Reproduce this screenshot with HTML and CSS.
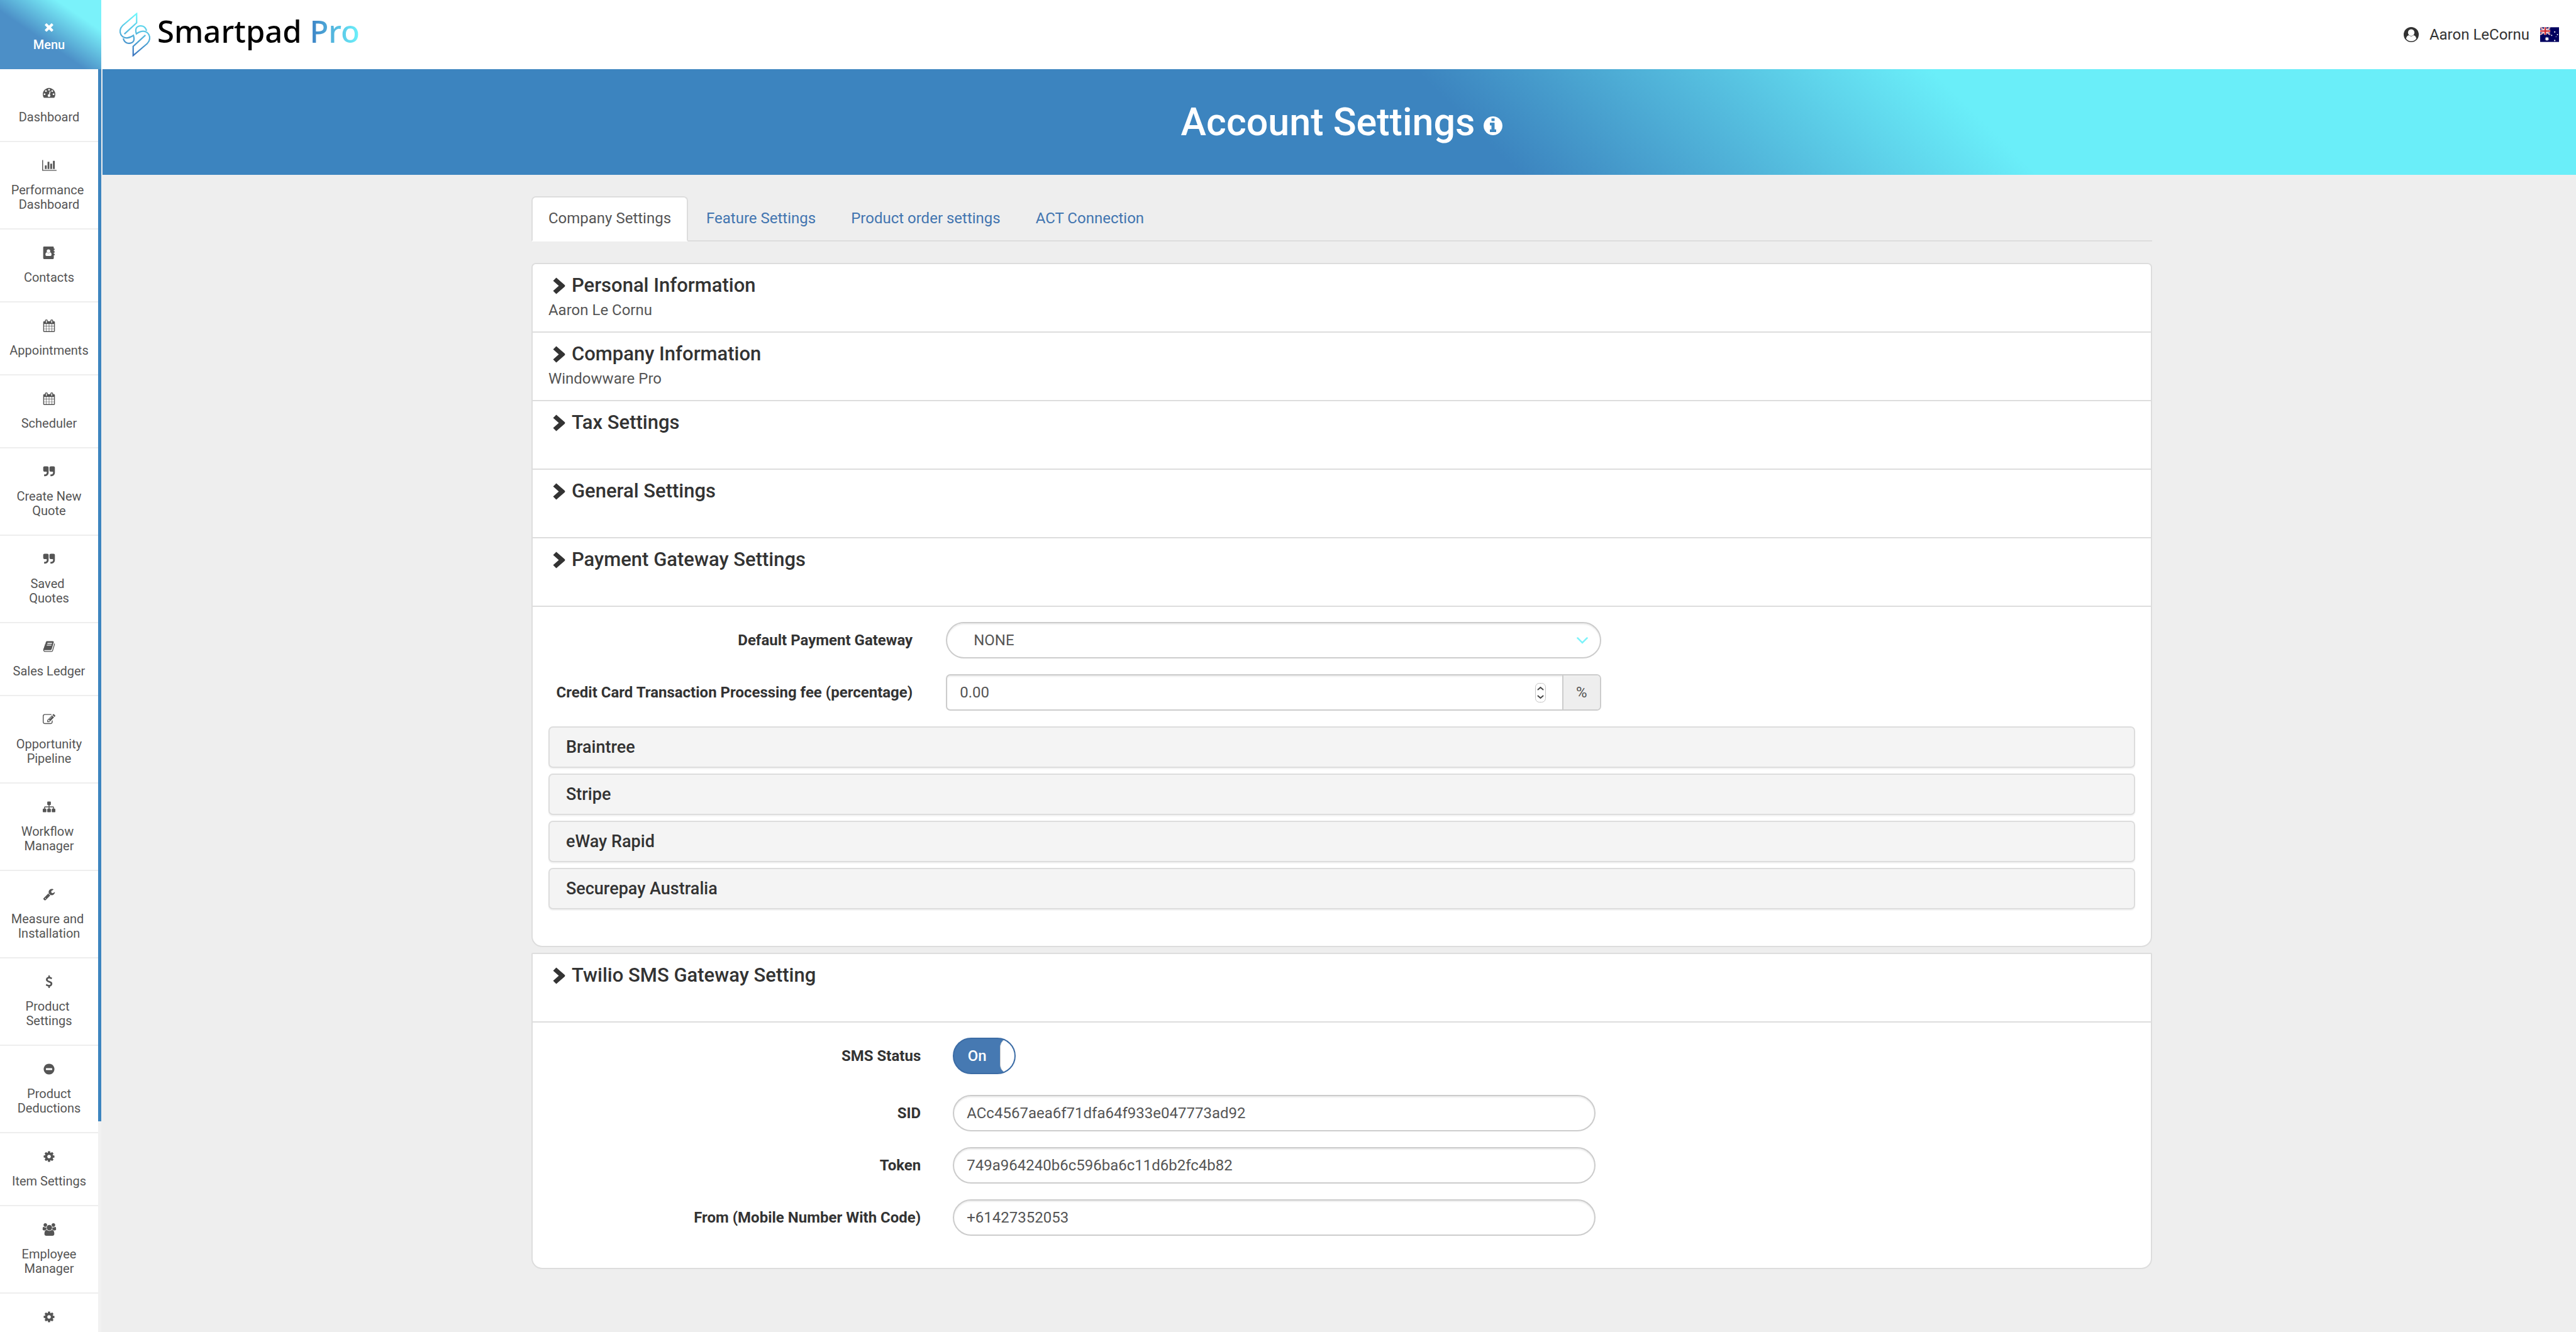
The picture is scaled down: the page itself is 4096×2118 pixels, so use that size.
FILE: index.html
```html
<!DOCTYPE html>
<html lang="en">
<head>
<meta charset="utf-8">
<title>Account Settings - Smartpad Pro</title>
<link rel="stylesheet" href="styles.css">
</head>
<body>
<svg class="sprite" aria-hidden="true">
  <symbol id="i-times" viewBox="0 0 1792 1792"><path d="M1490 1322q0 40-28 68l-136 136q-28 28-68 28t-68-28l-294-294-294 294q-28 28-68 28t-68-28l-136-136q-28-28-28-68t28-68l294-294-294-294q-28-28-28-68t28-68l136-136q28-28 68-28t68 28l294 294 294-294q28-28 68-28t68 28l136 136q28 28 28 68t-28 68l-294 294 294 294q28 28 28 68z"/></symbol>
  <symbol id="i-dash" viewBox="0 0 1792 1792"><path d="M384 1152q0-53-37.5-90.5t-90.5-37.5-90.5 37.5-37.5 90.5 37.5 90.5 90.5 37.5 90.5-37.5 37.5-90.5zm192-448q0-53-37.5-90.5t-90.5-37.5-90.5 37.5-37.5 90.5 37.5 90.5 90.5 37.5 90.5-37.5 37.5-90.5zm428 481l101-382q6-26-7.5-48.5t-38.5-29.5-48 6.5-30 39.5l-101 382q-60 5-107 43.5t-63 98.5q-20 77 20 146t117 89 146-20 89-117q16-60-6-117t-72-91zm660-33q0-53-37.5-90.5t-90.5-37.5-90.5 37.5-37.5 90.5 37.5 90.5 90.5 37.5 90.5-37.5 37.5-90.5zm-640-640q0-53-37.5-90.5t-90.5-37.5-90.5 37.5-37.5 90.5 37.5 90.5 90.5 37.5 90.5-37.5 37.5-90.5zm448 192q0-53-37.5-90.5t-90.5-37.5-90.5 37.5-37.5 90.5 37.5 90.5 90.5 37.5 90.5-37.5 37.5-90.5zm320 448q0 261-141 483-19 29-54 29h-1402q-35 0-54-29-141-221-141-483 0-182 71-348t191-286 286-191 348-71 348 71 286 191 191 286 71 348z"/></symbol>
  <symbol id="i-chart" viewBox="0 0 2048 1792"><path d="M640 896v512h-256v-512h256zm384-512v1024h-256v-1024h256zm1024 1152v128h-2048v-1536h128v1408h1920zm-640-896v768h-256v-768h256zm384-384v1152h-256v-1152h256z"/></symbol>
  <symbol id="i-contacts" viewBox="0 0 1792 1792"><path fill-rule="evenodd" d="M190 0h1250q130 0 130 130v150h70q50 0 50 45v130q0 45-50 45h-70v160h70q50 0 50 45v130q0 45-50 45h-70v160h70q50 0 50 45v130q0 45-50 45h-70v402q0 130-130 130h-1250q-130 0-130-130v-1532q0-130 130-130zM815 400a250 250 0 1 0 0 500a250 250 0 1 0 0-500zM600 830q-220 20-220 340q0 170 160 170h550q160 0 160-170q0-320-220-340q-100 110-215 110t-215-110z"/></symbol>
  <symbol id="i-cal" viewBox="0 0 1792 1792"><path d="M192 1664h288v-288h-288v288zm352 0h320v-288h-320v288zm-352-352h288v-320h-288v320zm352 0h320v-320h-320v320zm-352-384h288v-288h-288v288zm736 736h320v-288h-320v288zm-384-736h320v-288h-320v288zm768 736h288v-288h-288v288zm-384-352h320v-320h-320v320zm-352-864v-288q0-13-9.500-22.500t-22.500-9.500h-64q-13 0-22.500 9.500t-9.500 22.500v288q0 13 9.500 22.500t22.500 9.500h64q13 0 22.500-9.500t9.500-22.500zm736 864h288v-320h-288v320zm-384-384h320v-288h-320v288zm384 0h288v-288h-288v288zm32-480v-288q0-13-9.500-22.500t-22.500-9.500h-64q-13 0-22.500 9.500t-9.500 22.500v288q0 13 9.500 22.500t22.500 9.500h64q13 0 22.500-9.500t9.500-22.500zm384-64v1280q0 52-38 90t-90 38h-1408q-52 0-90-38t-38-90v-1280q0-52 38-90t90-38h128v-96q0-66 47-113t113-47h64q66 0 113 47t47 113v96h384v-96q0-66 47-113t113-47h64q66 0 113 47t47 113v96h128q52 0 90 38t38 90z"/></symbol>
  <symbol id="i-quote" viewBox="0 0 1792 1792"><path d="M832 320v704q0 104-40.500 198.500t-109.500 163.500-163.500 109.500-198.500 40.500h-64q-26 0-45-19t-19-45v-128q0-26 19-45t45-19h64q106 0 181-75t75-181v-32q0-40-28-68t-68-28h-224q-80 0-136-56t-56-136v-384q0-80 56-136t136-56h384q80 0 136 56t56 136zm896 0v704q0 104-40.500 198.500t-109.500 163.500-163.500 109.500-198.500 40.500h-64q-26 0-45-19t-19-45v-128q0-26 19-45t45-19h64q106 0 181-75t75-181v-32q0-40-28-68t-68-28h-224q-80 0-136-56t-56-136v-384q0-80 56-136t136-56h384q80 0 136 56t56 136z"/></symbol>
  <symbol id="i-book" viewBox="0 0 1792 1792"><path d="M1703 478q40 57 18 129l-275 906q-19 64-76.500 107.500t-122.500 43.500h-923q-77 0-148.500-53.500t-99.500-131.500q-24-67-2-127 0-4 3-27t4-37q1-8-3-21.500t-3-19.500q2-11 8-21t16.500-23.500 16.500-23.500q23-38 45-91.500t30-91.500q3-10 .5-30t-.5-28q3-11 17-28t17-23q21-36 42-92t25-90q1-9-2.500-32t.5-28q4-13 22-30.500t22-22.500q19-26 42.500-84.500t27.500-96.500q1-8-3-25.500t-2-26.500q2-8 9-18t18-23 17-21q8-12 16.500-30.500t15-35 16-36 19.500-32 26.500-23.500 36-11.500 47.500 5.500l-1 3q38-9 51-9h761q74 0 114 56t18 130l-274 906q-36 119-71.500 153.500t-128.500 34.500h-869q-27 0-38 15-11 16-1 43 24 70 144 70h923q29 0 56-15.500t35-41.500l300-987q7-22 5-57 38 15 59 43zm-1064 2q-4 13 2 22.500t20 9.500h608q13 0 25.500-9.500t16.500-22.500l21-64q4-13-2-22.500t-20-9.500h-608q-13 0-25.500 9.500t-16.500 22.500zm-83 256q-4 13 2 22.500t20 9.500h608q13 0 25.500-9.500t16.500-22.500l21-64q4-13-2-22.500t-20-9.500h-608q-13 0-25.500 9.500t-16.500 22.500z"/></symbol>
  <symbol id="i-edit" viewBox="0 0 1792 1792"><path d="M888 1184l116-116-152-152-116 116v56h96v96h56zm440-720q-16-16-33 1l-350 350q-17 17-1 33t33-1l350-350q17-17 1-33zm80 594v190q0 119-84.500 203.500t-203.500 84.500h-832q-119 0-203.500-84.500t-84.500-203.500v-832q0-119 84.500-203.500t203.500-84.500h832q63 0 117 25 15 7 18 23 3 17-9 29l-49 49q-14 14-32 8-23-6-45-6h-832q-66 0-113 47t-47 113v832q0 66 47 113t113 47h832q66 0 113-47t47-113v-126q0-13 9-22l64-64q15-15 35-7t20 29zm-96-738l288 288-672 672h-288v-288zm444 132l-92 92-288-288 92-92q28-28 68-28t68 28l152 152q28 28 28 68t-28 68z"/></symbol>
  <symbol id="i-sitemap" viewBox="0 0 1792 1792"><path d="M1792 1248v320q0 40-28 68t-68 28h-320q-40 0-68-28t-28-68v-320q0-40 28-68t68-28h96v-192h-512v192h96q40 0 68 28t28 68v320q0 40-28 68t-68 28h-320q-40 0-68-28t-28-68v-320q0-40 28-68t68-28h96v-192h-512v192h96q40 0 68 28t28 68v320q0 40-28 68t-68 28h-320q-40 0-68-28t-28-68v-320q0-40 28-68t68-28h96v-192q0-52 38-90t90-38h512v-192h-96q-40 0-68-28t-28-68v-320q0-40 28-68t68-28h320q40 0 68 28t28 68v320q0 40-28 68t-68 28h-96v192h512q52 0 90 38t38 90v192h96q40 0 68 28t28 68z"/></symbol>
  <symbol id="i-wrench" viewBox="0 0 1792 1792"><path d="M448 1472q0-26-19-45t-45-19-45 19-19 45 19 45 45 19 45-19 19-45zm644-420l-682 682q-37 37-90 37-52 0-91-37l-106-108q-38-36-38-90 0-53 38-91l681-681q39 98 114.500 173.500t173.500 114.500zm634-435q0 39-23 106-47 134-164.500 217.500t-258.500 83.500q-185 0-316.500-131.500t-131.500-316.500 131.500-316.500 316.500-131.500q58 0 121.500 16.500t107.500 46.500q16 11 16 28t-16 28l-293 169v224l193 107q5-3 79-48.500t135.500-81 70.500-35.500q15 0 23.500 10t8.500 25z"/></symbol>
  <symbol id="i-dollar" viewBox="0 0 1792 1792"><path d="M1362 1185q0 153-99.500 263.500t-258.500 136.500v175q0 14-9 23t-23 9h-135q-13 0-22.500-9.500t-9.500-22.500v-175q-66-9-127.500-31t-101.500-44.500-74-48-46.500-37.500-17.500-18q-17-21-2-41l103-135q7-10 23-12 15-2 24 9l2 2q113 99 243 125 37 8 74 8 81 0 142.500-43t61.500-122q0-28-15-53t-33.500-42-58.500-37.500-66-32-80-32.500q-39-16-61.500-25t-61.500-26.500-62.500-31-56.500-35.500-53.500-42.500-43.500-49-35.500-58-21-66.500-8.500-78q0-138 98-242t255-134v-180q0-13 9.500-22.500t22.500-9.500h135q14 0 23 9t9 23v176q57 6 110.500 23t87 33.500 63.500 37.500 39 29 15 14q17 18 5 38l-81 146q-8 15-23 16-14 3-27-7-3-3-14.500-12t-39-26.500-58.500-32-74.500-26-85.500-11.500q-95 0-155 43t-60 111q0 26 8.500 48t29.500 41.500 39.500 33 56 31 60.500 27 70 27.500q53 20 81 31.500t76 35 75.500 42.500 62 50 53 63.500 31.500 76.500 13 94z"/></symbol>
  <symbol id="i-minus" viewBox="0 0 1792 1792"><path d="M1344 960v-128q0-26-19-45t-45-19h-768q-26 0-45 19t-19 45v128q0 26 19 45t45 19h768q26 0 45-19t19-45zm320-64q0 209-103 385.500t-279.500 279.500-385.500 103-385.500-103-279.500-279.500-103-385.500 103-385.500 279.500-279.500 385.500-103 385.500 103 279.500 279.500 103 385.500z"/></symbol>
  <symbol id="i-cog" viewBox="0 0 1792 1792"><path d="M1152 896q0-106-75-181t-181-75-181 75-75 181 75 181 181 75 181-75 75-181zm512-109v222q0 12-8 23t-20 13l-185 28q-19 54-39 91 35 50 107 138 10 12 10 25t-9 23q-27 37-99 108t-94 71q-12 0-26-9l-138-108q-44 23-91 38-16 136-29 186-7 28-36 28h-222q-14 0-24.500-8.500t-11.500-21.500l-28-184q-49-16-90-37l-141 107q-10 9-25 9-14 0-25-11-126-114-165-168-7-10-7-23 0-12 8-23 15-21 51-66.500t54-70.500q-27-50-41-99l-183-27q-13-2-21-12.500t-8-23.500v-222q0-12 8-23t19-13l186-28q14-46 39-92-40-57-107-138-10-12-10-24 0-10 9-23 26-36 98.500-107.500t94.500-71.500q13 0 26 10l138 107q44-23 91-38 16-136 29-186 7-28 36-28h222q14 0 24.500 8.500t11.500 21.500l28 184q49 16 90 37l142-107q9-9 24-9 13 0 25 10 129 119 165 170 7 8 7 22 0 12-8 23-15 21-51 66.500t-54 70.500q26 50 41 98l183 28q13 2 21 12.500t8 23.500z"/></symbol>
  <symbol id="i-users" viewBox="-64 0 1920 1792"><path d="M529 896q-162 5-265 128h-134q-82 0-138-40.500t-56-118.500q0-353 124-353 6 0 43.500 21t97.500 42.500 119 21.500q67 0 133-23-5 37-5 66 0 139 81 256zm1071 637q0 120-73 189.500t-194 69.500h-874q-121 0-194-69.500t-73-189.500q0-53 3.500-103.500t14-109 26.500-108.500 43-97.500 62-81 85.500-53.500 111.500-20q10 0 43 21.500t73 48 107 48 135 21.500 135-21.500 107-48 73-48 43-21.500q61 0 111.500 20t85.500 53.500 62 81 43 97.500 26.500 108.500 14 109 3.500 103.500zm-1024-1277q0 106-75 181t-181 75-181-75-75-181 75-181 181-75 181 75 75 181zm704 384q0 159-112.500 271.500t-271.500 112.500-271.500-112.500-112.500-271.500 112.500-271.500 271.500-112.500 271.500 112.500 112.500 271.500zm576 225q0 78-56 118.500t-138 40.500h-134q-103-123-265-128 81-117 81-256 0-29-5-66 66 23 133 23 59 0 119-21.500t97.500-42.500 43.500-21q124 0 124 353zm-128-609q0 106-75 181t-181 75-181-75-75-181 75-181 181-75 181 75 75 181z"/></symbol>
  <symbol id="i-info" viewBox="128 128 1536 1536"><path d="M1152 1376v-160q0-14-9-23t-23-9h-96v-512q0-14-9-23t-23-9h-320q-14 0-23 9t-9 23v160q0 14 9 23t23 9h96v320h-96q-14 0-23 9t-9 23v160q0 14 9 23t23 9h448q14 0 23-9t9-23zm-128-896v-160q0-14-9-23t-23-9h-192q-14 0-23 9t-9 23v160q0 14 9 23t23 9h192q14 0 23-9t9-23zm640 416q0 209-103 385.500t-279.500 279.500-385.500 103-385.500-103-279.500-279.500-103-385.500 103-385.500 279.500-279.500 385.500-103 385.500 103 279.500 279.500 103 385.500z"/></symbol>
  <symbol id="i-chevron" viewBox="0 0 20 27"><path d="M5.500 0.500L19 12.200q1 1.300 0 2.600L5.500 26.500L0.500 21.500L9.500 13.500L0.500 5.500z"/></symbol>
</svg>

<div class="app">
  <aside class="sidebar">
    <button class="menu-button" type="button">
      <svg class="menu-icon"><use href="#i-times"/></svg>
      <span>Menu</span>
    </button>
    <div class="side-body">
      <nav class="side-nav">
        <a class="side-link" href="#"><svg class="icon"><use href="#i-dash"/></svg><span>Dashboard</span></a>
        <a class="side-link" href="#"><svg class="icon icon-wide"><use href="#i-chart"/></svg><span>Performance&nbsp;<br>Dashboard</span></a>
        <a class="side-link" href="#"><svg class="icon"><use href="#i-contacts"/></svg><span>Contacts</span></a>
        <a class="side-link" href="#"><svg class="icon"><use href="#i-cal"/></svg><span>Appointments</span></a>
        <a class="side-link" href="#"><svg class="icon"><use href="#i-cal"/></svg><span>Scheduler</span></a>
        <a class="side-link" href="#"><svg class="icon"><use href="#i-quote"/></svg><span>Create New<br>Quote</span></a>
        <a class="side-link" href="#"><svg class="icon"><use href="#i-quote"/></svg><span>Saved&nbsp;<br>Quotes</span></a>
        <a class="side-link" href="#"><svg class="icon"><use href="#i-book"/></svg><span>Sales Ledger</span></a>
        <a class="side-link" href="#"><svg class="icon"><use href="#i-edit"/></svg><span>Opportunity<br>Pipeline</span></a>
        <a class="side-link" href="#"><svg class="icon"><use href="#i-sitemap"/></svg><span>Workflow&nbsp;<br>Manager</span></a>
        <a class="side-link" href="#"><svg class="icon"><use href="#i-wrench"/></svg><span>Measure and&nbsp;<br>Installation</span></a>
        <a class="side-link" href="#"><svg class="icon"><use href="#i-dollar"/></svg><span>Product&nbsp;<br>Settings</span></a>
        <a class="side-link" href="#"><svg class="icon"><use href="#i-minus"/></svg><span>Product<br>Deductions</span></a>
        <a class="side-link" href="#"><svg class="icon"><use href="#i-cog"/></svg><span>Item Settings</span></a>
        <a class="side-link" href="#"><svg class="icon icon-wide"><use href="#i-users"/></svg><span>Employee<br>Manager</span></a>
        <a class="side-link" href="#" aria-label="More settings"><svg class="icon"><use href="#i-cog"/></svg></a>
      </nav>
      <div class="side-track"><div class="side-thumb"></div></div>
    </div>
  </aside>

  <div class="page">
    <header class="topbar">
      <a class="brand" href="#">
        <svg class="brand-mark" viewBox="0 0 57 82" preserveAspectRatio="none" aria-hidden="true">
          <defs><linearGradient id="mark" gradientUnits="userSpaceOnUse" x1="38" y1="2" x2="20" y2="80"><stop offset="0" stop-color="#6ffbfe"/><stop offset="1" stop-color="#3a72bd"/></linearGradient></defs>
          <g fill="none" stroke="url(#mark)" stroke-width="2.600">
            <path d="M9 40L31.700 19V2L6 24C-1 31 0 40 6 45C12 49 19 47 25.800 42.500C28 50 27 54 23 56C17 59 9 57 7 48"/>
            <path d="M48 42L25.300 63V80L51 58C58 51 57 42 51 37C45 33 38 35 31.200 39.500C29 32 30 28 34 26C40 23 48 25 50 34"/>
          </g>
        </svg>
        <span class="brand-name">Smartpad <span class="brand-pro">Pro</span></span>
      </a>
      <a class="account" href="#">
        <svg class="account-icon" viewBox="0 0 28 28" aria-hidden="true">
          <circle cx="14" cy="14" r="14" fill="#333"/>
          <path d="M4.500 21.500q1-5 5-6.200q4.500 4 9 0q4 1.200 5 6.200q-3.500 4.700-9.500 4.700t-9.500-4.700z" fill="#fff"/>
          <circle cx="14" cy="10.200" r="6" fill="#fff"/>
        </svg>
        <span>Aaron LeCornu</span>
        <svg class="flag" viewBox="0 0 36 28" role="img" aria-label="Australia">
          <rect width="36" height="28" fill="#00005f"/>
          <svg width="19.500" height="14.500" viewBox="0 0 20 15" preserveAspectRatio="none">
            <path d="M0 0L20 15M20 0L0 15" stroke="#fff" stroke-width="3"/>
            <path d="M0 0L20 15M20 0L0 15" stroke="#c8242b" stroke-width="1"/>
            <path d="M10 0V15M0 7.500H20" stroke="#fff" stroke-width="5"/>
            <path d="M10 0V15M0 7.500H20" stroke="#d0262c" stroke-width="3"/>
          </svg>
          <path fill="#fff" d="M13 17.800l1 2.200 2.400-.6-1.100 2.100 1.900 1.500-2.300.5v2.400l-1.900-1.500-1.900 1.500v-2.400l-2.300-.5 1.900-1.500-1.100-2.100 2.400.6z"/>
          <circle cx="27.800" cy="9" r="1.300" fill="#fff"/><circle cx="22" cy="15.500" r="1.200" fill="#fff"/><circle cx="33" cy="14" r="1.200" fill="#fff"/><circle cx="30.300" cy="18" r=".7" fill="#fff"/><circle cx="27.800" cy="25.300" r="1.300" fill="#fff"/>
        </svg>
      </a>
    </header>

    <div class="banner">
      <h1>Account Settings</h1>
      <svg class="banner-info"><use href="#i-info"/></svg>
    </div>

    <main class="content">
      <nav class="tabs">
        <a class="tab tab-active" href="#">Company Settings</a>
        <a class="tab" href="#">Feature Settings</a>
        <a class="tab" href="#">Product order settings</a>
        <a class="tab" href="#">ACT Connection</a>
      </nav>

      <section class="panel panel-first">
        <div class="group"><h2><button class="group-toggle" type="button"><svg class="chevron"><use href="#i-chevron"/></svg>Personal Information</button></h2><p>Aaron Le Cornu</p></div>
        <div class="group"><h2><button class="group-toggle" type="button"><svg class="chevron"><use href="#i-chevron"/></svg>Company Information</button></h2><p>Windowware Pro</p></div>
        <div class="group"><h2><button class="group-toggle" type="button"><svg class="chevron"><use href="#i-chevron"/></svg>Tax Settings</button></h2><p></p></div>
        <div class="group"><h2><button class="group-toggle" type="button"><svg class="chevron"><use href="#i-chevron"/></svg>General Settings</button></h2><p></p></div>
        <div class="group"><h2><button class="group-toggle" type="button"><svg class="chevron"><use href="#i-chevron"/></svg>Payment Gateway Settings</button></h2><p></p></div>
        <div class="panel-body gateway">
          <div class="form-row">
            <label for="gateway">Default Payment Gateway</label>
            <div class="select-wrap">
              <select id="gateway" class="field select"><option>NONE</option></select>
              <svg class="select-arrow" viewBox="0 0 18 11" aria-hidden="true"><path d="M1.500 1.500L9 9L16.500 1.500" fill="none" stroke="#7df3fa" stroke-width="2.500" stroke-linecap="round"/></svg>
            </div>
          </div>
          <div class="form-row">
            <label for="fee">Credit Card Transaction Processing fee (percentage)</label>
            <div class="input-group">
              <input id="fee" class="group-input" type="number" step="0.01" value="0.00">
              <svg class="spinner" viewBox="0 0 17 31" aria-hidden="true">
                <rect x=".5" y=".5" width="16" height="30" rx="6" fill="#fff" stroke="#c4c4c4"/>
                <path d="M4.500 10.500L8.500 7L12.500 10.500M4.500 20.500L8.500 24L12.500 20.500" fill="none" stroke="#444" stroke-width="2" stroke-linecap="round"/>
              </svg>
              <span class="addon">%</span>
            </div>
          </div>
          <div class="gateways">
            <button class="gateway-item" type="button">Braintree</button>
            <button class="gateway-item" type="button">Stripe</button>
            <button class="gateway-item" type="button">eWay Rapid</button>
            <button class="gateway-item" type="button">Securepay Australia</button>
          </div>
        </div>
      </section>

      <section class="panel">
        <div class="group"><h2><button class="group-toggle" type="button"><svg class="chevron"><use href="#i-chevron"/></svg>Twilio SMS Gateway Setting</button></h2><p></p></div>
        <div class="panel-body sms">
          <div class="form-row form-row-switch">
            <label for="sms-status">SMS Status</label>
            <label class="switch"><input id="sms-status" type="checkbox" checked><span class="switch-text">On</span><span class="switch-handle"></span></label>
          </div>
          <div class="form-row">
            <label for="sid">SID</label>
            <input id="sid" class="field" type="text" value="ACc4567aea6f71dfa64f933e047773ad92">
          </div>
          <div class="form-row">
            <label for="token">Token</label>
            <input id="token" class="field" type="text" value="749a964240b6c596ba6c11d6b2fc4b82">
          </div>
          <div class="form-row">
            <label for="from">From (Mobile Number With Code)</label>
            <input id="from" class="field" type="text" value="+61427352053">
          </div>
        </div>
      </section>
    </main>
  </div>
</div>
</body>
</html>
```
FILE: styles.css
```css
*, *::before, *::after { box-sizing: border-box; }

body {
  margin: 0;
  background: #eee;
  color: #333;
  font: 24px/33px Roboto, "Liberation Sans", sans-serif;
}

button, input, select { font: inherit; color: inherit; margin: 0; }
button { cursor: pointer; }
a { color: inherit; text-decoration: none; }
h1, h2, p { margin: 0; }
svg { display: block; fill: currentColor; flex: none; }

.sprite { display: none; }

.app { display: flex; height: 100vh; }

/* Sidebar */
.sidebar { display: flex; flex-direction: column; width: 161px; flex: none; height: 100vh; }

.menu-button {
  display: flex;
  flex-direction: column;
  align-items: center;
  gap: 7px;
  height: 110px;
  flex: none;
  padding: 33px 5px 0 0;
  border: 0;
  background: linear-gradient(to top right, #4c8fc7 42%, #7af2fa 78%);
  color: #fff;
  font-size: 20px;
  line-height: 23px;
  font-weight: 500;
}
.menu-icon { width: 20px; height: 20px; }

.side-body { display: flex; flex: 1; min-height: 0; }
.side-nav { flex: 1; overflow: hidden; background: #fff; }

.side-link {
  display: flex;
  flex-direction: column;
  align-items: center;
  gap: 18px;
  padding: 27px 0 26px;
  border-bottom: 2px solid #eee;
  color: #555;
  font-size: 20px;
  line-height: 23px;
  text-align: center;
}
.icon { width: 20px; height: 20px; }
.icon-wide { width: 23px; }

.side-track { width: 5px; background: #f1f1f1; }
.side-thumb { height: calc(100% * 5 / 6); background: #3c84bf; }

/* Page */
.page { flex: 1; min-width: 0; display: flex; flex-direction: column; }

.topbar {
  display: flex;
  justify-content: space-between;
  align-items: center;
  height: 110px;
  flex: none;
  padding: 0 27px 0 29px;
  background: #fff;
}

.brand { display: flex; align-items: center; gap: 11px; }
.brand-mark { width: 49px; height: 70px; }
.brand-name {
  padding-bottom: 12px;
  font: 500 49px/64px "Noto Sans", "Open Sans", sans-serif;
  color: #000;
}
.brand-pro {
  background: linear-gradient(to right, #3b7fc4, #6ef4fc);
  -webkit-background-clip: text;
  background-clip: text;
  color: transparent;
}

.account { display: flex; align-items: center; gap: 17px; }
.account-icon { width: 24px; height: 24px; }
.flag { width: 30px; height: 24px; }

.banner {
  display: flex;
  justify-content: center;
  align-items: center;
  gap: 14px;
  height: 168px;
  flex: none;
  margin-left: 2px;
  padding-left: 8px;
  background: linear-gradient(45deg, #3c84bf 55%, #6aeef9 75%);
  color: #fff;
}
.banner h1 { font-size: 61px; line-height: 68px; font-weight: 500; }
.banner-info { width: 30px; height: 30px; margin-top: 12px; }

.content { width: 66%; margin: 34px auto 0; padding: 0 5px 0 15px; }

/* Tabs */
.tabs { display: flex; border-bottom: 2px solid #ddd; }
.tab {
  margin: 0 2px -2px 0;
  padding: 17px 25px 18px;
  border: 2px solid transparent;
  border-radius: 7px 7px 0 0;
  color: #4275b0;
}
.tab-active { border-color: #ddd #ddd #fff; background: #fff; color: #555; }

/* Panels */
.panel {
  margin-top: 9px;
  border: 2px solid #ddd;
  border-radius: 2px 2px 17px 17px;
  background: #fff;
}
.panel-first { margin-top: 34px; border-radius: 7px 7px 17px 17px; }

.group { padding: 17px 25px; border-bottom: 2px solid #ddd; }
.group h2 { margin-bottom: 6px; font-size: 31px; line-height: 34px; font-weight: 500; }
.group p { min-height: 33px; color: #555; }
.group-toggle {
  display: flex;
  align-items: center;
  gap: 10px;
  padding: 0 0 0 7px;
  border: 0;
  background: none;
}
.chevron { width: 20px; height: 27px; }

.panel-body { display: grid; gap: 25px; padding: 24px 25px 0; }
.gateway { padding-bottom: 58px; }
.sms { padding-bottom: 51px; }

.form-row {
  display: grid;
  grid-template-columns: 579fr 1041fr 796fr;
  column-gap: 53px;
  align-items: center;
}
.sms .form-row { grid-template-columns: 592fr 1021fr 807fr; column-gap: 51px; }
.form-row-switch { margin-bottom: 8px; }
.form-row > label:first-child { text-align: right; font-weight: 700; }

.field {
  width: 100%;
  height: 58px;
  padding: 0 20px;
  border: 2px solid #ccc;
  border-radius: 29px;
  background: #fff;
  box-shadow: inset 0 2px 2px rgba(0, 0, 0, .075);
  color: #555;
}
.select-wrap { position: relative; }
.select { display: block; appearance: none; padding-left: 42px; }
.select-arrow { position: absolute; right: 21px; top: 24px; width: 18px; height: 11px; pointer-events: none; }

.input-group {
  display: flex;
  align-items: center;
  height: 58px;
  border: 2px solid #ccc;
  border-radius: 7px;
  background: #fff;
  box-shadow: inset 0 2px 2px rgba(0, 0, 0, .075);
  color: #555;
  overflow: hidden;
}
.group-input { flex: 1; min-width: 0; height: 54px; padding: 0 20px; border: 0; background: none; appearance: textfield; }
.group-input::-webkit-inner-spin-button { appearance: none; margin: 0; }
.spinner { width: 17px; height: 31px; margin-right: 26px; }
.addon {
  display: flex;
  align-items: center;
  justify-content: center;
  width: 60px;
  height: 54px;
  border-left: 2px solid #ccc;
  background: #eee;
}

.gateways { display: grid; gap: 9px; }
.gateway-item {
  height: 66px;
  padding: 0 26px;
  border: 2px solid #ddd;
  border-radius: 7px;
  background: #f4f4f4;
  box-shadow: 0 2px 2px rgba(0, 0, 0, .05);
  text-align: left;
  font-size: 27px;
  font-weight: 500;
}

.switch {
  display: flex;
  width: 100px;
  height: 58px;
  border: 2px solid #3c6ca5;
  border-radius: 29px;
  background: #4679b2;
  color: #fff;
  font-weight: 500;
  line-height: 54px;
  overflow: hidden;
  position: relative;
}
.switch input { position: absolute; opacity: 0; }
.switch-text { flex: 1; text-align: center; }
.switch-handle { width: 23px; border-left: 1px solid #ccc; border-radius: 23px / 27px; background: #fff; }
```
